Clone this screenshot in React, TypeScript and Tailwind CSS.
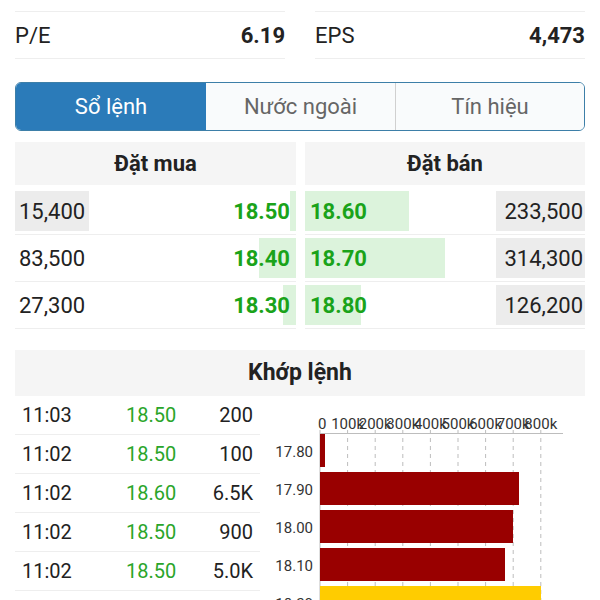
import React from "react";

const buys = [
  { vol: "15,400", price: "18.50", bar: 6, hot: true },
  { vol: "83,500", price: "18.40", bar: 37, hot: false },
  { vol: "27,300", price: "18.30", bar: 13, hot: false },
];

const sells = [
  { vol: "233,500", price: "18.60", bar: 104, hot: true },
  { vol: "314,300", price: "18.70", bar: 140, hot: true },
  { vol: "126,200", price: "18.80", bar: 56, hot: true },
];

const trades = [
  { time: "11:03", price: "18.50", vol: "200" },
  { time: "11:02", price: "18.50", vol: "100" },
  { time: "11:02", price: "18.60", vol: "6.5K" },
  { time: "11:02", price: "18.50", vol: "900" },
  { time: "11:02", price: "18.50", vol: "5.0K" },
];

const bars = [
  { label: "17.80", w: 5, color: "#990000" },
  { label: "17.90", w: 199, color: "#990000" },
  { label: "18.00", w: 193, color: "#990000" },
  { label: "18.10", w: 185, color: "#990000" },
  { label: "18.20", w: 221, color: "#ffcc00" },
];

const ticks = ["0", "100k", "200k", "300k", "400k", "500k", "600k", "700k", "800k"];

function VolumeChart() {
  const x0 = 60;
  const step = 27.6;
  return (
    <svg width="325" height="210" viewBox="0 0 325 210" className="block">
      {ticks.map((t, i) => (
        <line
          key={"g" + t}
          x1={x0 + i * step}
          x2={x0 + i * step}
          y1={34}
          y2={210}
          stroke="#bdbdbd"
          strokeWidth="1"
          strokeDasharray={i === 0 ? undefined : "4 4"}
        />
      ))}
      {ticks.map((t, i) => (
        <text
          key={t}
          x={i === 0 ? x0 - 2 : x0 + i * step}
          y={33}
          textAnchor={i === 0 ? "start" : "middle"}
          fontSize="15"
          fill="#333"
          fontFamily="Roboto, sans-serif"
        >
          {t}
        </text>
      ))}
      <line x1={x0} x2={303} y1={37.5} y2={37.5} stroke="#bdbdbd" strokeWidth="1" />
      {bars.map((b, i) => (
        <g key={b.label}>
          <rect x={x0} y={38 + i * 38} width={b.w} height={33} fill={b.color} />
          <text
            x={53}
            y={61 + i * 38}
            textAnchor="end"
            fontSize="15"
            fill="#333"
            fontFamily="Roboto, sans-serif"
          >
            {b.label}
          </text>
        </g>
      ))}
    </svg>
  );
}

export default function App() {
  return (
    <div className="relative h-[600px] w-[600px] overflow-hidden bg-white px-[15px] font-['Roboto',sans-serif] text-[#222]">
      <div className="grid grid-cols-2 gap-[30px] pt-[11px]">
        <div className="flex h-[48px] items-center justify-between border-y border-[#eeeeee] text-[22px]">
          <span>P/E</span>
          <span className="font-bold">6.19</span>
        </div>
        <div className="flex h-[48px] items-center justify-between border-y border-[#eeeeee] text-[22px]">
          <span>EPS</span>
          <span className="font-bold">4,473</span>
        </div>
      </div>

      <div className="mt-[23px] flex h-[49px] overflow-hidden rounded-[6px] border border-[#3d7fa8] text-[22px]">
        <div className="flex w-[190px] items-center justify-center bg-[#2b7bb9] text-white">Sổ lệnh</div>
        <div className="flex w-[190px] items-center justify-center border-r border-[#d0d0d0] bg-[#f9fbfc] text-[#666]">
          Nước ngoài
        </div>
        <div className="flex flex-1 items-center justify-center bg-[#f9fbfc] text-[#666]">Tín hiệu</div>
      </div>

      <div className="mt-[11px] grid grid-cols-[281px_280px] gap-[9px]">
        <div>
          <div className="flex h-[43px] items-center justify-center bg-[#f5f5f5] text-[22px] font-bold">Đặt mua</div>
          <div className="mt-[3px]">
            {buys.map((r) => (
              <div key={r.price} className="flex h-[47px] items-center justify-between border-b border-[#eeeeee] py-[3px]">
                <div className={`flex h-full items-center px-[4px] text-[22px] ${r.hot ? "bg-[#ececec]" : ""}`}>{r.vol}</div>
                <div className="relative flex h-full items-center pr-[6px]">
                  <div className="absolute right-0 top-0 h-full bg-[#dcf3dc]" style={{ width: r.bar }} />
                  <span className="relative text-[22px] font-bold text-[#1aa31a]">{r.price}</span>
                </div>
              </div>
            ))}
          </div>
        </div>
        <div>
          <div className="flex h-[43px] items-center justify-center bg-[#f5f5f5] text-[22px] font-bold">Đặt bán</div>
          <div className="mt-[3px]">
            {sells.map((r) => (
              <div key={r.price} className="flex h-[47px] items-center justify-between border-b border-[#eeeeee] py-[3px]">
                <div className="relative flex h-full items-center pl-[5px]">
                  <div className="absolute left-0 top-0 h-full bg-[#dcf3dc]" style={{ width: r.bar }} />
                  <span className="relative text-[22px] font-bold text-[#1aa31a]">{r.price}</span>
                </div>
                <div className={`flex h-full w-[89px] items-center justify-end pr-[2px] text-[22px] ${r.hot ? "bg-[#ececec]" : ""}`}>
                  {r.vol}
                </div>
              </div>
            ))}
          </div>
        </div>
      </div>

      <div className="mt-[21px] flex h-[46px] items-center justify-center bg-[#f5f5f5] text-[23px] font-bold">Khớp lệnh</div>

      <div className="flex">
        <div className="w-[245px]">
          {trades.map((t, i) => (
            <div key={i} className="grid h-[39px] grid-cols-[90px_90px_1fr] items-center border-b border-[#eeeeee] text-[20px]">
              <span className="pl-[7px]">{t.time}</span>
              <span className="pl-[21px] text-[#2aa52a]">{t.price}</span>
              <span className="pr-[7px] text-right">{t.vol}</span>
            </div>
          ))}
        </div>
        <VolumeChart />
      </div>
    </div>
  );
}
